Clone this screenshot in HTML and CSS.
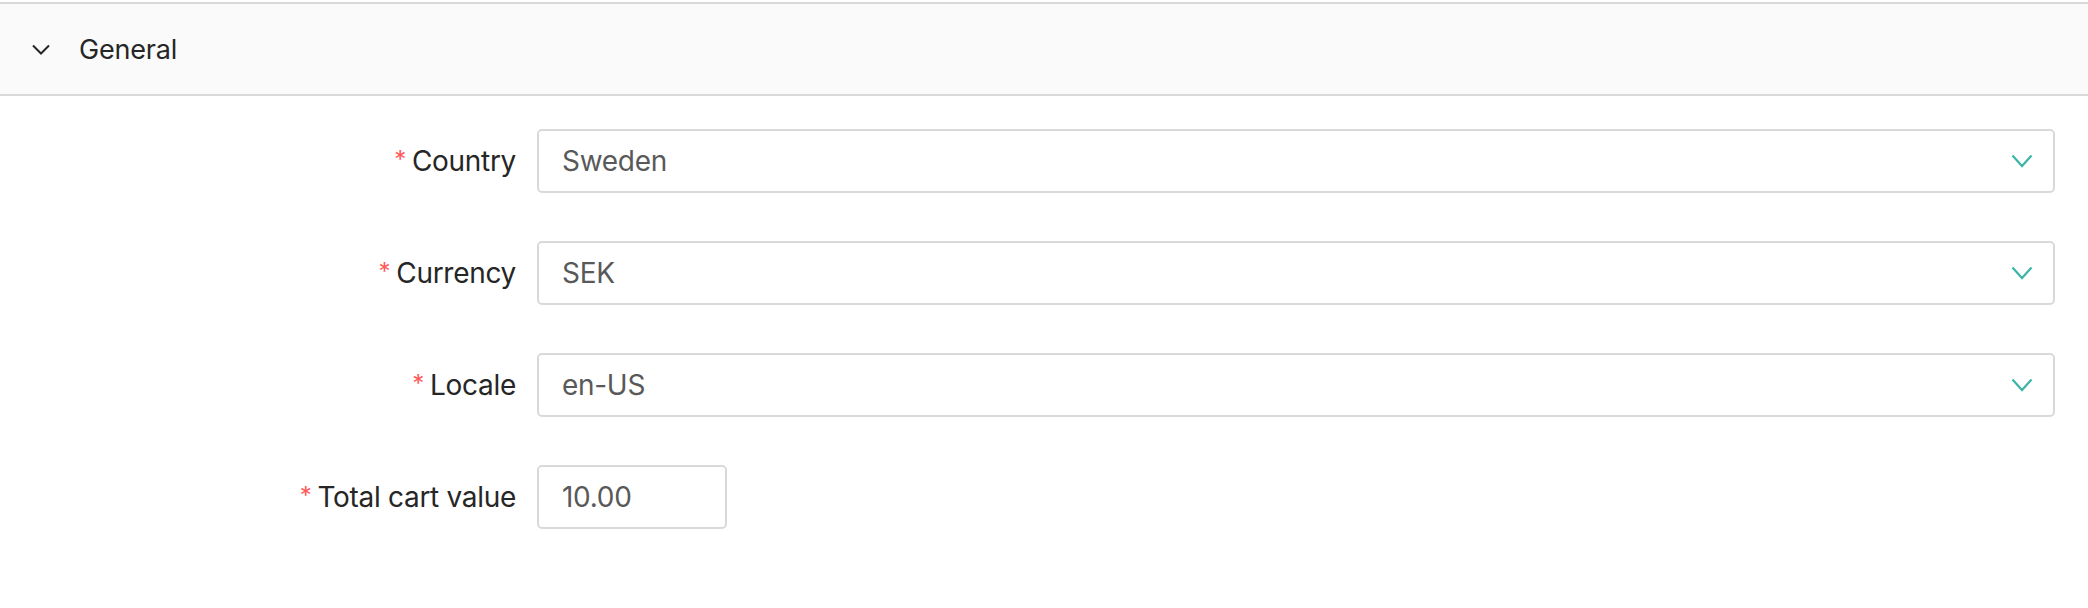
FILE: index.html
```html
<!DOCTYPE html>
<html lang="en">
  <head>
    <meta charset="UTF-8" />
    <title>General</title>
    <link rel="stylesheet" href="styles.css">
  </head>
  <body>
    <div class="panel">
      <div class="panel-header">
        <svg class="panel-arrow" width="18" height="11" viewBox="0 0 18 11">
          <path d="M1 1.5 L9 9.5 L17 1.5" fill="none" stroke="#262626" stroke-width="2" />
        </svg>
        <span class="panel-title">General</span>
      </div>

      <form class="form">
        <div class="form-row">
          <label class="form-label"><span class="req">*</span>Country</label>
          <div class="select">
            <span class="select-value">Sweden</span>
            <svg class="select-arrow" width="22" height="14" viewBox="0 0 22 14">
              <path d="M1.5 1.5 L11 12 L20.5 1.5" fill="none" stroke="#3bb5a5" stroke-width="2.2" />
            </svg>
          </div>
        </div>

        <div class="form-row">
          <label class="form-label"><span class="req">*</span>Currency</label>
          <div class="select">
            <span class="select-value">SEK</span>
            <svg class="select-arrow" width="22" height="14" viewBox="0 0 22 14">
              <path d="M1.5 1.5 L11 12 L20.5 1.5" fill="none" stroke="#3bb5a5" stroke-width="2.2" />
            </svg>
          </div>
        </div>

        <div class="form-row">
          <label class="form-label"><span class="req">*</span>Locale</label>
          <div class="select">
            <span class="select-value">en-US</span>
            <svg class="select-arrow" width="22" height="14" viewBox="0 0 22 14">
              <path d="M1.5 1.5 L11 12 L20.5 1.5" fill="none" stroke="#3bb5a5" stroke-width="2.2" />
            </svg>
          </div>
        </div>

        <div class="form-row">
          <label class="form-label"><span class="req">*</span>Total cart value</label>
          <input class="number-input" type="text" value="10.00" />
        </div>
      </form>
    </div>
  </body>
</html>
```

FILE: styles.css
```css
body {
  margin: 0;
  background: #fff;
  font-family: Inter, "Noto Sans", Arial, sans-serif;
  color: #262626;
}

.panel {
  margin-top: 2px;
  border-top: 2px solid #d9d9d9;
}

.panel-header {
  display: flex;
  align-items: center;
  height: 90px;
  padding-left: 32px;
  background: #fafafa;
  border-bottom: 2px solid #d9d9d9;
}

.panel-arrow {
  margin-right: 29px;
}

.panel-title {
  font-size: 27px;
  letter-spacing: -0.2px;
  color: #262626;
}

.form {
  display: flex;
  flex-direction: column;
  gap: 48px;
  padding: 33px 33px 0 0;
}

.form-row {
  display: flex;
  align-items: center;
  gap: 21px;
}

.form-label {
  width: 516px;
  text-align: right;
  font-size: 28px;
  letter-spacing: -0.3px;
  color: #262626;
}

.req {
  color: #ff5a5c;
  font-size: 24px;
  margin-right: 6px;
  position: relative;
  top: -3px;
}

.select {
  flex: 1;
  display: flex;
  align-items: center;
  justify-content: space-between;
  height: 60px;
  padding: 0 20px 0 23px;
  border: 2px solid #d9d9d9;
  border-radius: 5px;
  font-size: 28px;
  letter-spacing: -0.3px;
  color: #595959;
}

.number-input {
  width: 140px;
  height: 60px;
  padding: 0 23px;
  border: 2px solid #d9d9d9;
  border-radius: 5px;
  font-family: inherit;
  font-size: 28px;
  letter-spacing: -0.3px;
  color: #595959;
  outline: none;
}
```
